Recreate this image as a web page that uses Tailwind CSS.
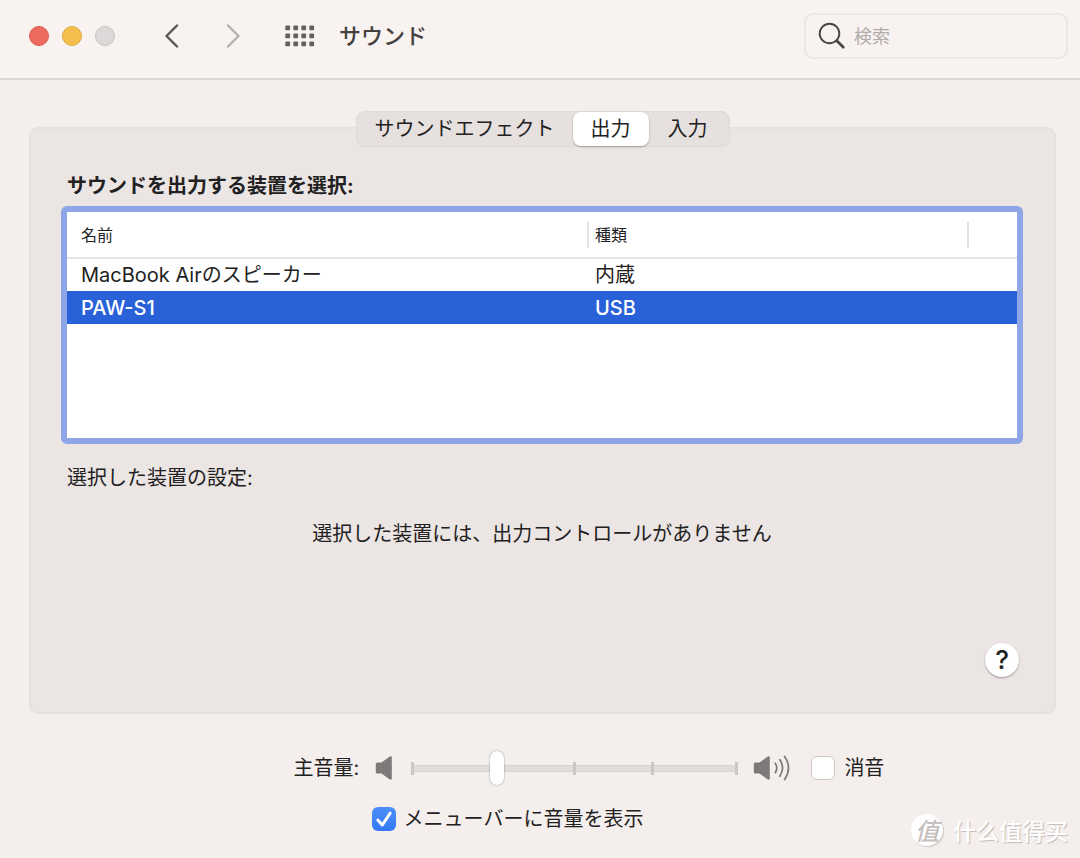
<!DOCTYPE html>
<html lang="ja">
<head>
<meta charset="utf-8">
<meta name="viewport" content="width=device-width, initial-scale=1">
<title>サウンド</title>
<script src="https://cdn.jsdelivr.net/npm/@tailwindcss/browser@4"></script>
</head>
<body class="relative flex min-h-screen flex-col bg-[#f4eeed] font-['Inter','Noto_Sans_CJK_JP',sans-serif] text-[20px] leading-8 text-[#222121]">

<header class="flex h-20 items-center justify-between border-b-2 border-[#dcd6d5] bg-[#f8f2f1] pr-3 pb-1.5 pl-[29px]">
  <div class="flex items-center">
    <div class="flex gap-[13px]">
      <button aria-label="閉じる" class="size-5 rounded-full border border-[#dc5b50] bg-[#ed6a5f]"></button>
      <button aria-label="しまう" class="size-5 rounded-full border border-[#dfa63d] bg-[#f5bf4f]"></button>
      <button aria-label="拡大" class="size-5 rounded-full border border-[#c8c3c2] bg-[#ded9d8]"></button>
    </div>
    <nav class="ml-[49px] flex items-center">
      <button aria-label="戻る"><svg class="h-6 w-4" viewBox="0 0 16 24" fill="none" stroke="#5b5656" stroke-width="2.4" stroke-linecap="round" stroke-linejoin="round"><path d="M13 1.500L2.500 12L13 22.500"/></svg></button>
      <button aria-label="進む" class="ml-[45px]"><svg class="h-6 w-4" viewBox="0 0 16 24" fill="none" stroke="#b5b0af" stroke-width="2.4" stroke-linecap="round" stroke-linejoin="round"><path d="M3 1.500L13.500 12L3 22.500"/></svg></button>
      <button aria-label="すべてを表示" class="ml-11"><svg class="h-[22px] w-[30px]" viewBox="0 0 30 22" fill="#655f5f"><g id="r"><rect x="0.300" y="0.500" width="4.800" height="4.800" rx="1"/><rect x="8.300" y="0.500" width="4.800" height="4.800" rx="1"/><rect x="16.300" y="0.500" width="4.800" height="4.800" rx="1"/><rect x="24.300" y="0.500" width="4.800" height="4.800" rx="1"/></g><use href="#r" y="8"/><use href="#r" y="16"/></svg></button>
    </nav>
    <h1 class="ml-6 text-[22px] font-medium text-[#454141]">サウンド</h1>
  </div>
  <label class="flex h-[46px] w-[264px] items-center rounded-[9px] border-2 border-[#ece6e5] pl-3">
    <svg class="size-7 shrink-0" viewBox="0 0 28 28" fill="none" stroke="#4a4645" stroke-linecap="round"><circle cx="11.500" cy="11.500" r="9.800" stroke-width="1.900"/><path d="M18.800 18.800L25.300 25.300" stroke-width="2.700"/></svg>
    <input type="search" aria-label="検索" placeholder="検索" class="mt-0.5 ml-2 w-full min-w-0 bg-transparent text-[18px] outline-none placeholder:text-[#b0abaa]">
  </label>
</header>

<main class="flex flex-col pt-[31px] pr-6 pl-[29px]">
  <div role="tablist" class="z-10 flex h-9 self-center rounded-[9px] border border-[#dfd9d8] bg-[#e6e0df] text-center">
    <button role="tab" aria-selected="false" class="w-[216px]">サウンドエフェクト</button>
    <button role="tab" aria-selected="true" class="w-[76px] rounded-[8px] bg-white shadow-[0_1px_2px_rgba(0,0,0,0.3)]">出力</button>
    <button role="tab" aria-selected="false" class="w-20 pr-0.5">入力</button>
  </div>

  <section class="-mt-5 flex min-h-[587px] flex-col rounded-[9px] border-2 border-[#e6e0df] bg-[#ebe5e4] pt-[41px] pr-[31px] pb-[35px] pl-[30px]">
    <h2 class="pl-1.5 font-bold">サウンドを出力する装置を選択:</h2>
    <div class="mt-1 h-[238px] rounded-[6px] border-6 border-[#8ea6e8] bg-white">
      <table class="w-full table-fixed border-collapse text-left">
        <colgroup><col><col class="w-[380px]"><col class="w-[50px]"></colgroup>
        <thead class="text-[16px]">
          <tr class="h-[46px] border-b-2 border-[#e5e4e4]">
            <th class="pl-3.5 font-normal">名前</th>
            <th class="font-normal"><div class="flex h-[26px] items-center border-l-2 border-[#e4e3e3] pl-1.5">種類</div></th>
            <th><div class="h-[26px] border-l-2 border-[#e4e3e3]"></div></th>
          </tr>
        </thead>
        <tbody>
          <tr class="h-[33px]"><td class="pl-3.5">MacBook Airのスピーカー</td><td class="pl-2">内蔵</td><td></td></tr>
          <tr aria-selected="true" class="h-[33px] bg-[#2961d9] font-medium text-white"><td class="pl-3.5">PAW-S1</td><td class="pl-2">USB</td><td></td></tr>
        </tbody>
      </table>
    </div>
    <h3 class="mt-[18px] pl-1.5">選択した装置の設定:</h3>
    <p class="mt-6 text-center">選択した装置には、出力コントロールがありません</p>
    <button aria-label="ヘルプ" class="mt-auto mr-1 flex size-[34px] items-center justify-center self-end rounded-full bg-white text-[26px] font-medium shadow-[0_1px_2px_rgba(0,0,0,0.35)]">?</button>
  </section>
</main>

<footer class="flex flex-col items-center pt-9 pl-[98px]">
  <div class="flex flex-col gap-[17px]">
    <div class="flex h-9 items-center">
      <label for="volume">主音量:</label>
      <svg class="ml-4 h-6 w-[18px] shrink-0" viewBox="0 0 18 24" fill="#7d7979"><path d="M2.300 6.500H6.500L14.800 0.600Q16.800-0.200 16.800 1.500V22.500Q16.800 24.200 14.800 23.400L6.500 17.500H2.300Q.800 17.500.800 16V8Q.800 6.500 2.300 6.500Z"/></svg>
      <div class="relative ml-[18px] h-9 w-[327px]">
        <div class="absolute inset-x-0 top-[15px] h-[7px] border-y border-[#d9d3d2] bg-[#e2dcdb]"></div>
        <div class="absolute inset-x-0 top-3 grid h-[13px] grid-cols-[162fr_78fr_87fr]">
          <span class="border-l-3 border-[#cdc7c6]"></span><span class="border-l-3 border-[#cdc7c6]"></span><span class="border-x-3 border-[#cdc7c6]"></span>
        </div>
        <input id="volume" type="range" min="0" max="100" value="25" class="absolute inset-0 h-9 w-full appearance-none bg-transparent [&::-webkit-slider-thumb]:h-[34px] [&::-webkit-slider-thumb]:w-3.5 [&::-webkit-slider-thumb]:appearance-none [&::-webkit-slider-thumb]:rounded-full [&::-webkit-slider-thumb]:bg-white [&::-webkit-slider-thumb]:shadow-[0_0_2px_rgba(0,0,0,0.4)]">
      </div>
      <svg class="ml-[15px] h-[26px] w-[38px] shrink-0" viewBox="0 0 38 26" fill="#7d7979"><path d="M2.300 7.500H6.500L14.800 1.600Q16.800.800 16.800 2.500V23.500Q16.800 25.200 14.800 24.400L6.500 18.500H2.300Q.800 18.500.800 17V9Q.800 7.500 2.300 7.500Z"/><path d="M22.300 8.300Q25.300 13 22.300 17.700M26.800 4.800Q32.300 13 26.800 21.200M31.600 1.500Q39.400 13 31.600 24.500" fill="none" stroke="#7d7979" stroke-width="1.700" stroke-linecap="round"/></svg>
      <label class="ml-5 flex items-center gap-[9px]"><input type="checkbox" class="size-6 appearance-none rounded-[6px] border border-[#cdc7c6] bg-white">消音</label>
    </div>
    <label class="flex items-center gap-2 pl-[78px]">
      <span class="relative size-6">
        <input type="checkbox" checked class="block size-6 appearance-none rounded-[6px] bg-linear-to-b from-[#4b8ff8] to-[#3478f6]">
        <svg class="pointer-events-none absolute inset-0 size-6" viewBox="0 0 24 24" fill="none" stroke="#fff" stroke-width="3" stroke-linecap="round" stroke-linejoin="round"><path d="M5.800 13L10.300 18L18.200 6.200"/></svg>
      </span>
      メニューバーに音量を表示
    </label>
  </div>
</footer>

<div lang="zh-CN" class="absolute right-3 bottom-3 flex items-center gap-2.5 font-['Noto_Sans_CJK_SC',sans-serif] text-[23px] text-white">
  <span class="flex size-8 items-center justify-center rounded-full bg-white text-[24px] font-medium text-[#c5bfbe] italic shadow-[1px_1px_1px_#cac4c3]">值</span>
  <span class="font-medium [text-shadow:1px_1px_1px_#bfb9b8]">什么值得买</span>
</div>
</body>
</html>
